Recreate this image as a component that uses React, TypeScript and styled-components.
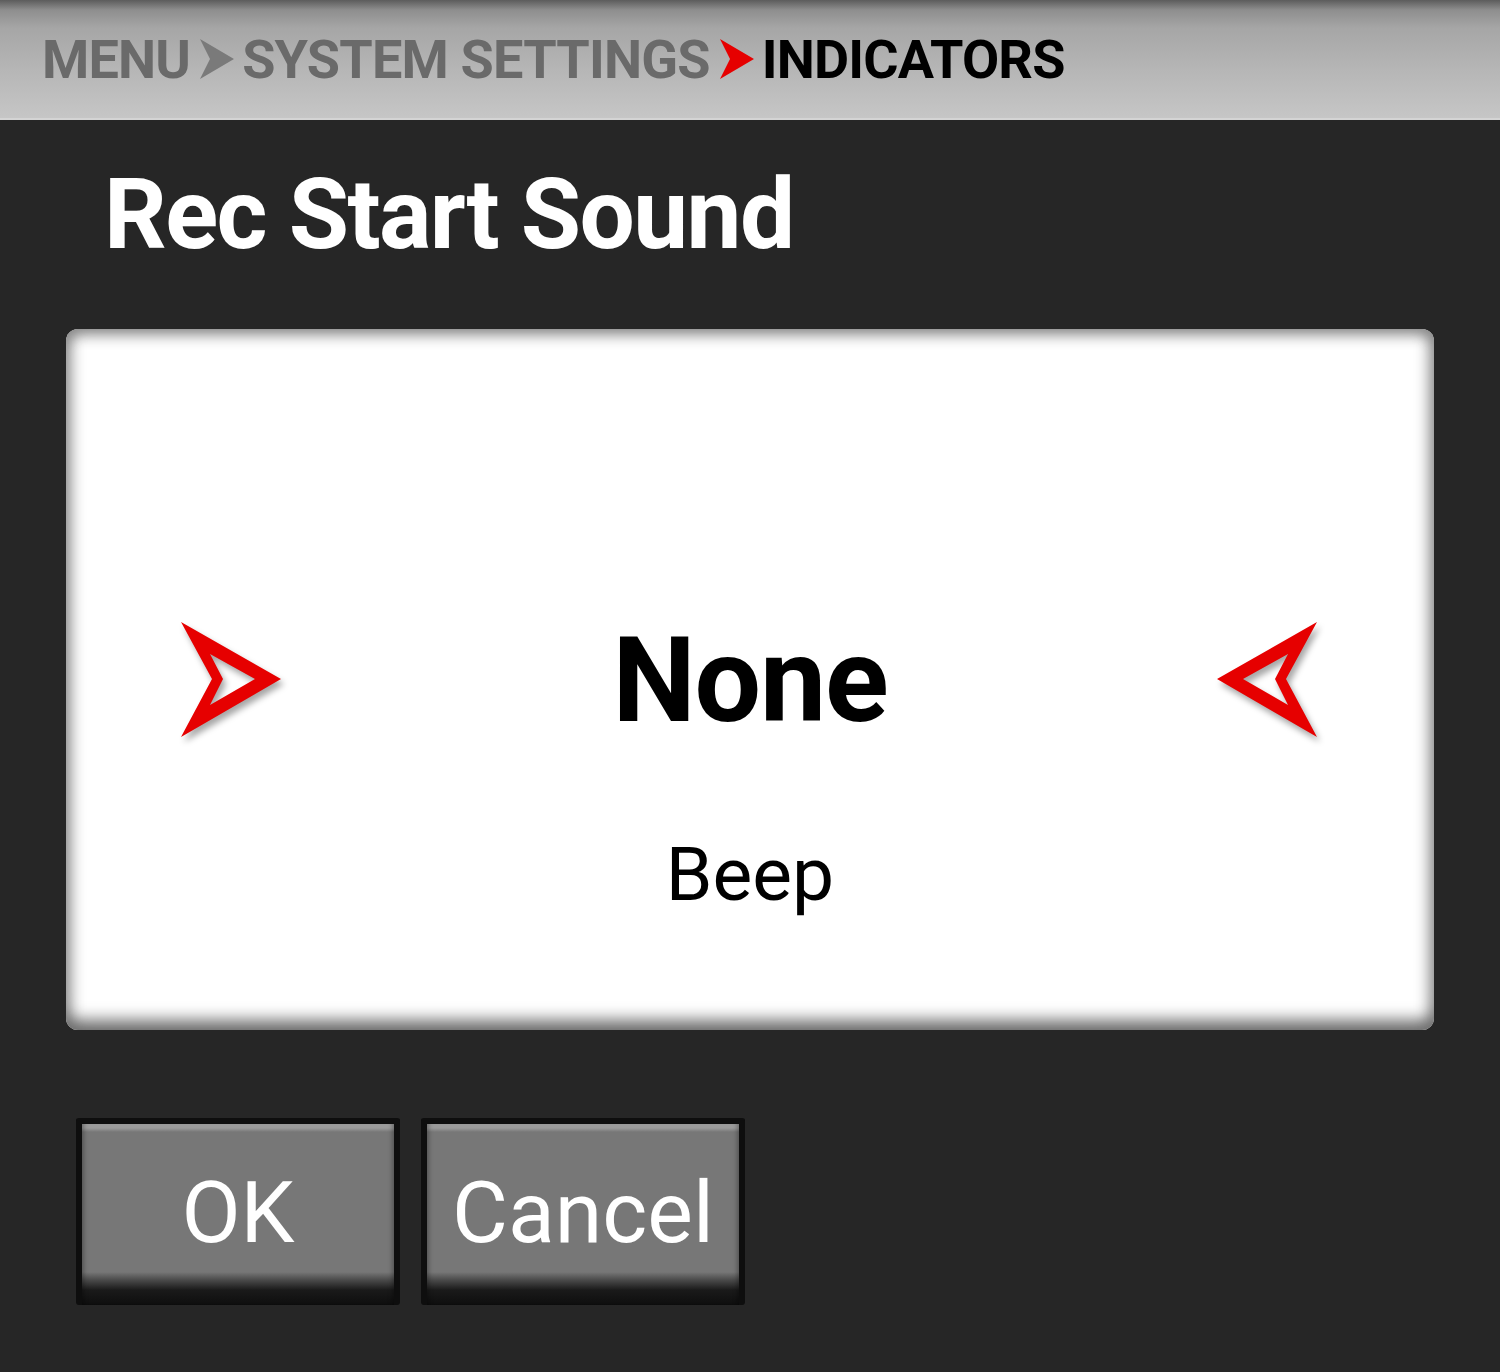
import React, { useState } from 'react';
import styled, { createGlobalStyle } from 'styled-components';

const GlobalStyle = createGlobalStyle`
  html, body {
    margin: 0;
    padding: 0;
    background: #262626;
  }
  body {
    font-family: Roboto, "Noto Sans", sans-serif;
  }
`;

const Screen = styled.div`
  width: 1500px;
  height: 1372px;
  background: #262626;
  display: flex;
  flex-direction: column;
  overflow: hidden;
`;

const Header = styled.div`
  height: 120px;
  flex-shrink: 0;
  box-sizing: border-box;
  padding: 0 0 0 42px;
  display: flex;
  align-items: center;
  background: linear-gradient(
    to bottom,
    #5c5c5c 0px,
    #8e8e8e 10px,
    #a6a6a6 28px,
    #b6b6b6 70px,
    #c6c6c6 118px
  );
  border-bottom: 2px solid #d4d4d4;
`;

const Crumb = styled.span<{ $active?: boolean }>`
  font-family: "Liberation Sans Narrow", "Roboto", sans-serif;
  font-weight: 700;
  font-size: 54px;
  line-height: 1;
  color: ${({ $active }) => ($active ? '#000' : '#6a6a6a')};
  letter-spacing: -0.8px;
  padding-top: 2px;
`;

const CrumbArrow = styled.svg`
  width: 34px;
  height: 40px;
  margin: 0 8px 0 10px;
  flex-shrink: 0;
`;

const Title = styled.h1`
  margin: 0;
  padding: 46px 0 0 104px;
  height: 209px;
  box-sizing: border-box;
  font-family: Roboto, sans-serif;
  font-weight: 700;
  font-size: 98px;
  line-height: 1;
  letter-spacing: -1.6px;
  color: #fff;
`;

const Card = styled.div`
  margin: 0 66px;
  height: 701px;
  flex-shrink: 0;
  background: #fff;
  border-radius: 12px;
  box-shadow: inset 0 14px 14px -8px #8a8a8a, inset 0 -18px 16px -8px #6e6e6e,
    inset 14px 0 14px -8px #a0a0a0, inset -14px 0 14px -8px #a0a0a0;
  display: grid;
  grid-template-columns: 230px 1fr 230px;
`;

const ArrowCell = styled.div<{ $side: 'left' | 'right' }>`
  display: flex;
  justify-content: ${({ $side }) => ($side === 'left' ? 'flex-end' : 'flex-start')};
  padding: 292px ${({ $side }) => ($side === 'left' ? '14px' : '0')} 0
    ${({ $side }) => ($side === 'right' ? '12px' : '0')};
  cursor: pointer;
`;

const ArrowSvg = styled.svg`
  width: 102px;
  height: 118px;
  overflow: visible;
  filter: drop-shadow(3px 5px 3px rgba(0, 0, 0, 0.35));
`;

const Options = styled.div`
  display: flex;
  flex-direction: column;
  align-items: center;
  padding-top: 293px;
`;

const Selected = styled.div`
  font-family: Roboto, sans-serif;
  font-weight: 700;
  font-size: 118px;
  line-height: 1;
  color: #000;
  letter-spacing: -1.2px;
`;

const Option = styled.div`
  margin-top: 97px;
  font-family: Roboto, sans-serif;
  font-weight: 400;
  font-size: 75px;
  line-height: 1;
  color: #000;
`;

const Buttons = styled.div`
  display: flex;
  gap: 21px;
  padding: 88px 0 0 76px;
`;

const Button = styled.button`
  width: 324px;
  height: 187px;
  box-sizing: border-box;
  border: 6px solid #0e0e0e;
  border-bottom-width: 0;
  border-radius: 3px;
  background: linear-gradient(
    to bottom,
    #9a9a9a 0px,
    #9a9a9a 4px,
    #777 8px,
    #777 148px,
    #4a4a4a 156px,
    #1a1a1a 166px,
    #0e0e0e 181px
  );
  box-shadow: inset 6px 0 4px -4px rgba(0, 0, 0, 0.3), inset -6px 0 4px -4px rgba(0, 0, 0, 0.3);
  color: #fff;
  font-family: Roboto, sans-serif;
  font-weight: 400;
  font-size: 86px;
  line-height: 1;
  display: flex;
  align-items: flex-start;
  justify-content: center;
  padding: 46px 0 0;
  cursor: pointer;
`;

const options = ['None', 'Beep'];

const PointerArrow: React.FC<{ dir: 'left' | 'right' }> = ({ dir }) => (
  <ArrowSvg viewBox="0 0 102 118">
    <g transform={dir === 'left' ? 'translate(102 0) scale(-1 1)' : undefined}>
      <path
        fillRule="evenodd"
        fill="#e60000"
        d="M1 1 L101 58 L1 116 L32 58 Z M30 33 L75 58 L30 84 L43 58 Z"
      />
    </g>
  </ArrowSvg>
);

const App: React.FC = () => {
  const [index, setIndex] = useState(0);
  const step = (d: number) =>
    setIndex((i) => (i + d + options.length) % options.length);

  return (
    <Screen>
      <GlobalStyle />
      <Header>
        <Crumb>MENU</Crumb>
        <CrumbArrow viewBox="0 0 34 40">
          <path d="M0 0 L34 20 L0 40 L10 20 Z" fill="#7a7a7a" />
        </CrumbArrow>
        <Crumb>SYSTEM SETTINGS</Crumb>
        <CrumbArrow viewBox="0 0 34 40">
          <path d="M0 0 L34 20 L0 40 L10 20 Z" fill="#e60000" />
        </CrumbArrow>
        <Crumb $active>INDICATORS</Crumb>
      </Header>
      <Title>Rec Start Sound</Title>
      <Card>
        <ArrowCell $side="left" onClick={() => step(-1)}>
          <PointerArrow dir="right" />
        </ArrowCell>
        <Options>
          <Selected>{options[index]}</Selected>
          <Option>{options[(index + 1) % options.length]}</Option>
        </Options>
        <ArrowCell $side="right" onClick={() => step(1)}>
          <PointerArrow dir="left" />
        </ArrowCell>
      </Card>
      <Buttons>
        <Button>OK</Button>
        <Button>Cancel</Button>
      </Buttons>
    </Screen>
  );
};

export default App;
